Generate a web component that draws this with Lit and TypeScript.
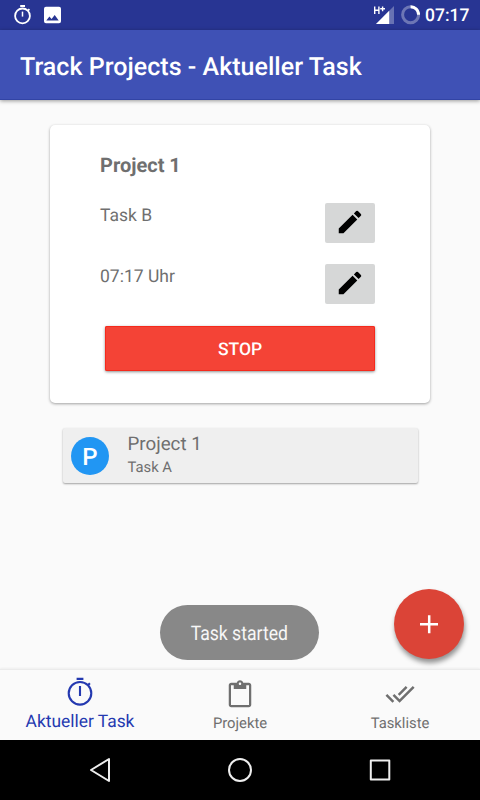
import { LitElement, html, css } from "lit";
import { customElement } from "lit/decorators.js";

const pencil = html`<svg class="pencil" width="30" height="30" viewBox="0 0 24 24">
  <path d="M3 17.25V21h3.75L17.81 9.94l-3.75-3.75L3 17.25zM20.71 7.04a1 1 0 0 0 0-1.41l-2.34-2.34a1 1 0 0 0-1.41 0l-1.83 1.83 3.75 3.75 1.83-1.83z"/>
</svg>`;

const timerIcon = html`<svg width="30" height="32" viewBox="0 0 30 32" fill="none" stroke="currentColor" stroke-width="2.1">
  <circle cx="15" cy="18.3" r="11.3"/>
  <path d="M11.6 3.9h6.8M15 11v10M23.2 10l1.7-1.7"/>
</svg>`;

const clipboardIcon = html`<svg width="30" height="30" viewBox="0 0 24 24" fill="currentColor">
  <path d="M19 3h-4.400C14.300 1.700 13.300 1 12 1s-2.300.700-2.600 2H5c-1.100 0-2 .9-2 2v15.600c0 1.100.9 2 2 2h14c1.100 0 2-.9 2-2V5c0-1.100-.9-2-2-2zm-7-.300c.55 0 1 .45 1 1s-.45 1-1 1-1-.45-1-1 .45-1 1-1zM19.200 20.800H4.800V4.900H7v3h10v-3h2.200v15.900z"/>
</svg>`;

const doneAllIcon = html`<svg width="30" height="30" viewBox="0 0 24 24" fill="currentColor">
  <path d="M18 7l-1.410-1.410-6.340 6.340 1.410 1.410L18 7zm4.240-1.410L11.660 16.170 7.480 12l-1.410 1.410L11.660 19l12-12-1.420-1.410zM.41 13.410L6 19l1.410-1.410L1.830 12 .41 13.410z"/>
</svg>`;

const notifications = html`<svg width="80" height="30" viewBox="0 0 80 30">
  <g fill="none" stroke="#fff" stroke-width="1.800">
    <circle cx="22.500" cy="15.900" r="7.400"/>
    <path d="M20.200 6h4.800M27.700 10.800l1.700-1.700"/>
    <path d="M22.500 11.600v5" stroke-width="1.500"/>
  </g>
  <path fill="#fff" fill-rule="evenodd" d="M46 6.700h13a2 2 0 0 1 2 2v12.600a2 2 0 0 1-2 2H46a2 2 0 0 1-2-2V8.700a2 2 0 0 1 2-2zM46.300 20.400h12.400l-4-5.400-3.100 4-2.200-2.500z"/>
</svg>`;

const statusIcons = html`<svg width="50" height="30" viewBox="370 0 50 30">
  <path d="M394 6v18h-18z" fill="#fff" opacity=".3"/>
  <path d="M389.200 10.800V24H376z" fill="#fff"/>
  <path d="M374.700 6.500v7.500M378.900 6.500v7.500M374.700 10.200h4.200M380.200 8.800h4.800M382.600 6.400v4.800" stroke="#fff" stroke-width="1.400" fill="none"/>
  <circle cx="410.600" cy="14.700" r="8" fill="none" stroke="#fff" stroke-opacity=".32" stroke-width="3"/>
  <path d="M410.600 6.700a8 8 0 0 1 8 8" fill="none" stroke="#fff" stroke-width="3"/>
</svg>`;

@customElement("app-root")
export class AppRoot extends LitElement {
  static styles = css`
    :host {
      display: flex;
      flex-direction: column;
      position: relative;
      width: 480px;
      height: 800px;
      overflow: hidden;
      background: #fafafa;
      color: #6f6f6f;
      font-family: Roboto, "Liberation Sans", sans-serif;
      white-space: nowrap;
      text-rendering: geometricPrecision;
    }
    svg { display: block; flex: none; }
    .status {
      display: flex;
      height: 30px;
      background: #283593;
      color: #fff;
    }
    .status .spacer { flex: 1; }
    .clock {
      width: 60px;
      padding-left: 5px;
      box-sizing: border-box;
      font-size: 17.5px;
      line-height: 33px;
      font-weight: 500;
    }
    .appbar {
      height: 70px;
      box-sizing: border-box;
      padding-left: 20px;
      background: #3f51b5;
      border-bottom: 1px solid #3244a5;
      box-shadow: 0 1px 4px rgba(0, 0, 0, .4);
      color: #fff;
      font-size: 25px;
      font-weight: 500;
      letter-spacing: .03px;
      line-height: 75px;
    }
    .content { flex: 1; }
    .card {
      box-sizing: border-box;
      width: 380px;
      height: 278px;
      margin: 25px 50px 0;
      padding: 27px 55px 0 50px;
      border-radius: 5px;
      background: #fff;
      box-shadow: 0 1px 3px rgba(0, 0, 0, .36);
    }
    .project { font-size: 20px; font-weight: 700; line-height: 26px; height: 24px; }
    .row {
      display: flex;
      justify-content: space-between;
      height: 40px;
      font-size: 17.5px;
      line-height: 26px;
    }
    .row.task { margin-top: 26.5px; }
    .row.time { margin-top: 21px; }
    .edit {
      display: flex;
      align-items: center;
      justify-content: center;
      width: 50px;
      height: 40px;
      border-radius: 2px;
      background: #d6d7d7;
    }
    .pencil { margin-bottom: 0.5px; }
    .stop {
      margin: 22px 0 0 5px;
      height: 45px;
      border-radius: 2px;
      background: #f44336;
      box-shadow: inset 0 0 0 1px #f5291c, 0 1px 3px rgba(0, 0, 0, .45);
      color: #fff;
      font-size: 17.5px;
      font-weight: 500;
      line-height: 48px;
      text-align: center;
    }
    .item {
      display: flex;
      align-items: center;
      box-sizing: border-box;
      width: 355px;
      height: 55px;
      margin: 25px 62.5px 0;
      padding-left: 8.5px;
      gap: 18.5px;
      border-radius: 2px;
      background: #efefef;
      box-shadow: 0 1px 2px rgba(0, 0, 0, .36);
    }
    .avatar {
      width: 38px;
      height: 38px;
      border-radius: 50%;
      background: #2196f3;
      color: #fff;
      font-size: 24px;
      font-weight: 500;
      line-height: 40px;
      text-align: center;
    }
    .name { font-size: 18.75px; line-height: 23px; }
    .sub { font-size: 14.8px; line-height: 22px; }
    .tabs {
      display: grid;
      grid-template-columns: repeat(3, 160px);
      height: 71px;
      box-sizing: border-box;
      border-top: 1px solid #ebebeb;
      box-shadow: 0 -1px 2px rgba(0, 0, 0, .05);
    }
    .tab {
      display: flex;
      flex-direction: column;
      align-items: center;
      padding-top: 9px;
      font-size: 14.8px;
      line-height: 20px;
    }
    .tab span { margin-top: 4px; }
    .tab.active { color: #2439b0; padding-top: 5px; font-size: 17.4px; }
    .tab.active span { margin-top: 5px; }
    .system {
      height: 60px;
      background: #000;
    }
    .toast {
      position: absolute;
      left: 160px;
      top: 605px;
      width: 159px;
      height: 55px;
      border-radius: 28px;
      background: #888;
      color: #f7f7f7;
      font-size: 20px;
      line-height: 57px;
      display: flex;
      justify-content: center;
    }
    .toast span { transform: scaleX(.88); }
    .fab {
      position: absolute;
      left: 393.5px;
      top: 588.5px;
      width: 70px;
      height: 70px;
      border-radius: 50%;
      background: #db4437;
      box-shadow: 1px 4px 5px rgba(0, 0, 0, .42);
    }
  `;

  render() {
    return html`
      <div class="status">
        ${notifications}
        <div class="spacer"></div>
        ${statusIcons}
        <div class="clock">07:17</div>
      </div>
      <div class="appbar">Track Projects - Aktueller Task</div>
      <div class="content">
        <div class="card">
          <div class="project">Project 1</div>
          <div class="row task"><span>Task B</span><div class="edit">${pencil}</div></div>
          <div class="row time"><span>07:17 Uhr</span><div class="edit">${pencil}</div></div>
          <div class="stop">STOP</div>
        </div>
        <div class="item">
          <div class="avatar">P</div>
          <div>
            <div class="name">Project 1</div>
            <div class="sub">Task A</div>
          </div>
        </div>
      </div>
      <div class="tabs">
        <div class="tab active">${timerIcon}<span>Aktueller Task</span></div>
        <div class="tab">${clipboardIcon}<span>Projekte</span></div>
        <div class="tab">${doneAllIcon}<span>Taskliste</span></div>
      </div>
      <div class="system">
        <svg width="480" height="60" viewBox="0 0 480 60" fill="none" stroke="#eee" stroke-width="2" stroke-linejoin="round">
          <path d="M91 30l18-11v22z"/>
          <circle cx="240" cy="30" r="11"/>
          <path d="M370.800 20.500h18.500v19h-18.500z"/>
        </svg>
      </div>
      <div class="toast"><span>Task started</span></div>
      <div class="fab">
        <svg width="70" height="70" viewBox="0 0 70 70" stroke="#fff" stroke-width="2.500">
          <path d="M26 35.200h18M35.200 26.200v18"/>
        </svg>
      </div>
    `;
  }
}
